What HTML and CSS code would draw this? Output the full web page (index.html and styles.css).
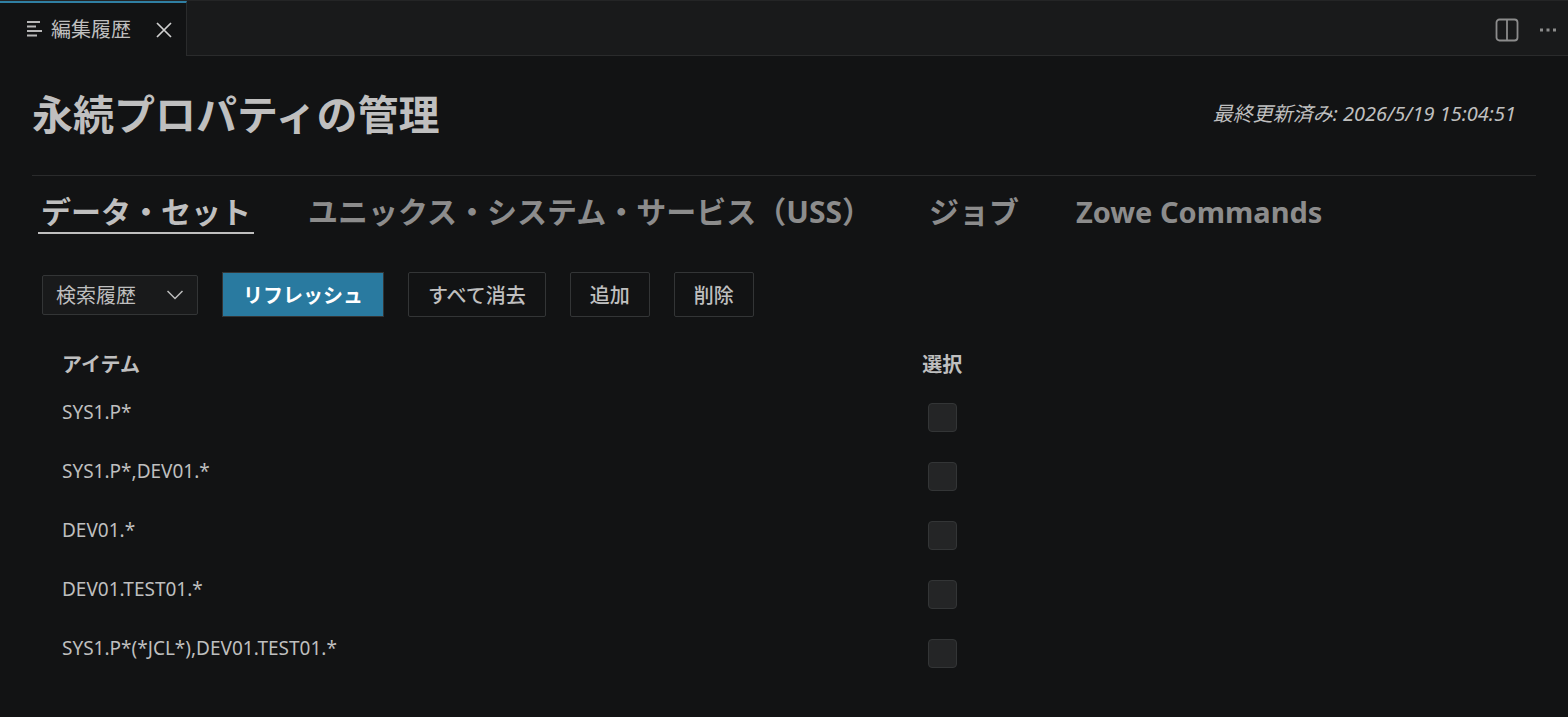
FILE: index.html
```html
<!DOCTYPE html>
<html lang="ja">
<head>
<meta charset="utf-8">
<title>編集履歴</title>
<link rel="stylesheet" href="styles.css">
</head>
<body>
<header class="editor-bar">
  <div class="editor-tab">
    <svg class="list-icon" viewBox="0 0 16 18" width="16" height="18" aria-hidden="true"><path d="M0 1h13M0 5.500h9M0 10h15M0 14.500h10" fill="none" stroke="#b8b8b8" stroke-width="2"/></svg>
    <span class="editor-name">編集履歴</span>
    <button class="icon-button" type="button" aria-label="閉じる">
      <svg viewBox="0 0 16 16" width="16" height="16"><path d="M1 1l14 14M15 1L1 15" fill="none" stroke="#d0d0d0" stroke-width="1.700"/></svg>
    </button>
  </div>
  <div class="editor-actions">
    <button class="icon-button" type="button" aria-label="エディターの分割">
      <svg viewBox="0 0 24 24" width="24" height="24"><rect x="1.500" y="1.500" width="21" height="21" rx="3" fill="none" stroke="#8c8c8c" stroke-width="1.800"/><path d="M12 1.500v21" stroke="#8c8c8c" stroke-width="1.800"/></svg>
    </button>
    <button class="icon-button" type="button" aria-label="その他の操作">
      <svg viewBox="0 0 18 4" width="18" height="4"><path d="M1 .5h3v3H1zM7.500.5h3v3h-3zM14 .5h3v3h-3z" fill="#8c8c8c"/></svg>
    </button>
  </div>
</header>
<main class="panel">
  <div class="title-row">
    <h1 class="title">永続プロパティの管理</h1>
    <p class="updated">最終更新済み: 2026/5/19 15:04:51</p>
  </div>
  <nav class="tabs" role="tablist">
    <button class="tab tab-active" type="button" role="tab" aria-selected="true">データ・セット</button>
    <button class="tab" type="button" role="tab" aria-selected="false">ユニックス・システム・サービス（USS）</button>
    <button class="tab" type="button" role="tab" aria-selected="false">ジョブ</button>
    <button class="tab tab-latin" type="button" role="tab" aria-selected="false">Zowe Commands</button>
  </nav>
  <div class="toolbar">
    <div class="select-box">
      <select class="select" aria-label="履歴の種類"><option>検索履歴</option></select>
      <svg class="chevron" viewBox="0 0 16 10" width="16" height="10" aria-hidden="true"><path d="M.5 1L8 8.500 15.500 1" fill="none" stroke="#bfbfbf" stroke-width="1.500"/></svg>
    </div>
    <button class="button button-primary" type="button">リフレッシュ</button>
    <button class="button" type="button">すべて消去</button>
    <button class="button" type="button">追加</button>
    <button class="button" type="button">削除</button>
  </div>
  <table class="items">
    <thead><tr><th class="col-item">アイテム</th><th>選択</th></tr></thead>
    <tbody>
      <tr><td><label for="i1">SYS1.P*</label></td><td><input class="check" type="checkbox" id="i1"></td></tr>
      <tr><td><label for="i2">SYS1.P*,DEV01.*</label></td><td><input class="check" type="checkbox" id="i2"></td></tr>
      <tr><td><label for="i3">DEV01.*</label></td><td><input class="check" type="checkbox" id="i3"></td></tr>
      <tr><td><label for="i4">DEV01.TEST01.*</label></td><td><input class="check" type="checkbox" id="i4"></td></tr>
      <tr><td><label for="i5">SYS1.P*(*JCL*),DEV01.TEST01.*</label></td><td><input class="check" type="checkbox" id="i5"></td></tr>
    </tbody>
  </table>
</main>
</body>
</html>
```
FILE: styles.css
```css
* { box-sizing: border-box; }
body {
  margin: 0;
  background: #121314;
  color: #bfbfbf;
  font: 20px/28px "Noto Sans", "Noto Sans CJK JP", sans-serif;
}
button, select { font: inherit; color: inherit; }

.editor-bar {
  display: flex;
  height: 56px;
  background: #191a1b;
  border-top: 1px solid #242526;
}
.editor-tab {
  display: flex;
  align-items: center;
  padding: 0 14px 0 27px;
  background: #121314;
  border-top: 2px solid #2f7fa3;
  border-right: 1px solid #2a2b2c;
}
.editor-name { margin: 0 25px 0 8px; }
.editor-actions {
  flex: 1;
  display: flex;
  align-items: center;
  justify-content: flex-end;
  gap: 20px;
  padding: 3px 11px 0 0;
  border-bottom: 1px solid #2a2b2c;
}
.icon-button {
  display: flex;
  padding: 0;
  border: 0;
  background: none;
}

.panel { padding: 28px 32px; }
.title-row {
  display: flex;
  justify-content: space-between;
  align-items: center;
  padding: 0 20px 31px 0;
  border-bottom: 1px solid #2a2b2c;
}
.title { margin: 0; font-size: 41px; line-height: 60px; }
.updated { margin: 0; font-style: italic; }

.tabs { display: flex; gap: 51px; padding: 16px 6px 0; }
.tab {
  padding: 0 3px;
  border: 0;
  border-bottom: 2px solid transparent;
  background: none;
  color: #8c8c8c;
  font-size: 30px;
  font-weight: 700;
  line-height: 40px;
  white-space: nowrap;
}
.tab-latin { font-size: 29px; }
.tab-active { color: #bfbfbf; border-color: #bfbfbf; }

.toolbar {
  display: flex;
  align-items: center;
  gap: 24px;
  padding: 38px 10px 0;
}
.select-box { display: grid; align-items: center; }
.select-box > * { grid-area: 1 / 1; }
.select {
  width: 156px;
  height: 40px;
  padding: 2px 13px 0;
  border: 1px solid #333536;
  border-radius: 2px;
  background: #191a1b;
  appearance: none;
}
.chevron { justify-self: end; margin-right: 15px; pointer-events: none; }
.button {
  height: 45px;
  padding: 2px 19px 0;
  border: 1px solid #333536;
  border-radius: 2px;
  background: none;
  font-weight: 500;
}
.button-primary {
  padding: 2px 20px 0;
  border-radius: 0;
  background: #297aa0;
  color: #fff;
  font-weight: 700;
}

.items {
  width: 100%;
  margin-top: 27px;
  border-collapse: collapse;
  table-layout: fixed;
}
.items th { padding: 7px 30px 12px; text-align: left; }
.items td { height: 59px; padding: 7px 30px 0; vertical-align: top; }
.items label { font-size: 19px; }
.col-item { width: 57.2%; }
.check {
  display: block;
  width: 29px;
  height: 29px;
  margin: 5px 6px;
  border: 1px solid #333536;
  border-radius: 4px;
  background: #242526;
  appearance: none;
}
.check:checked { background: #297aa0; }
```
